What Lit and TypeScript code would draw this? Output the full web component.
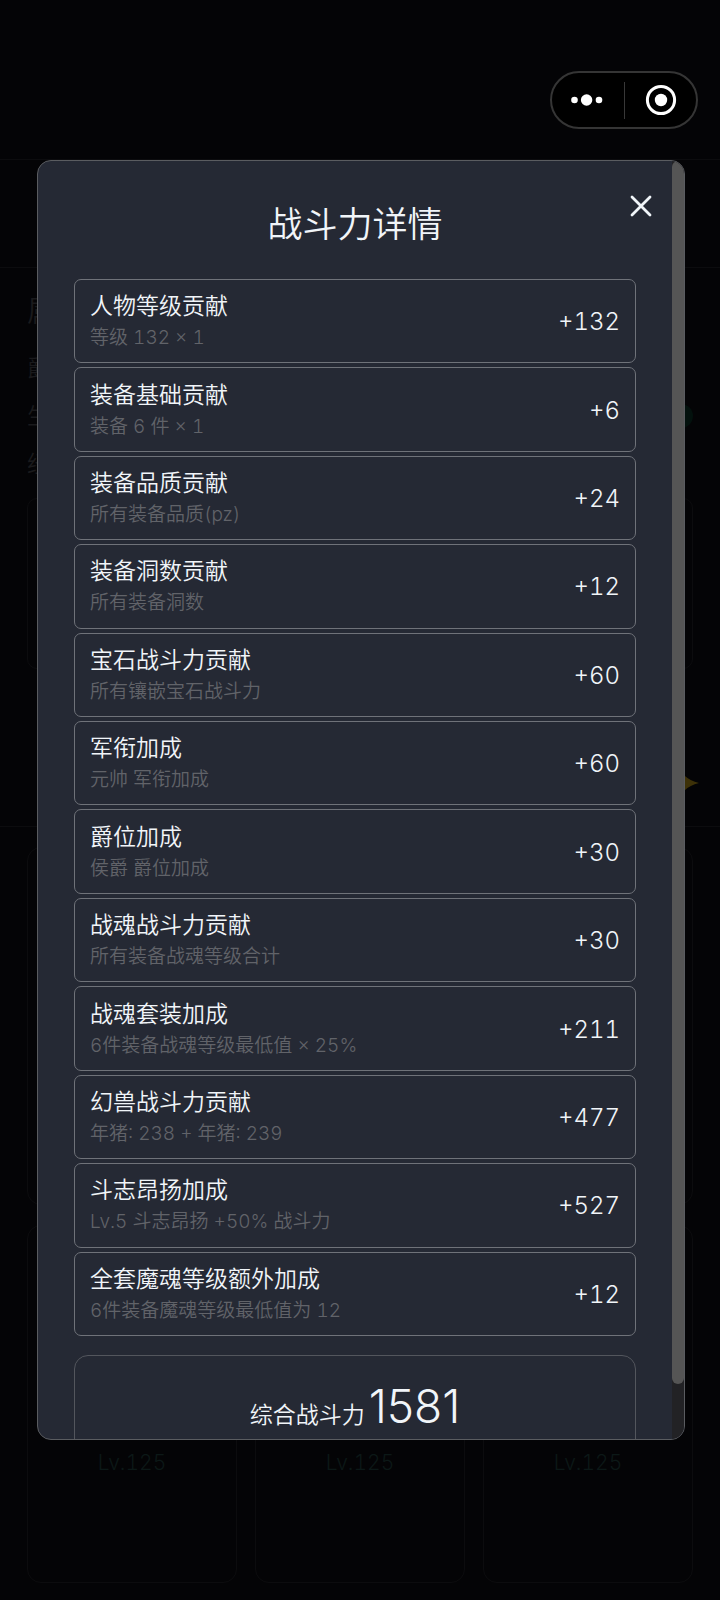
import { LitElement, html, css } from "lit";
import { customElement, property } from "lit/decorators.js";

interface Contribution {
  title: string;
  note: string;
  value: number;
}

const CONTRIBUTIONS: Contribution[] = [
  { title: "人物等级贡献", note: "等级 132 × 1", value: 132 },
  { title: "装备基础贡献", note: "装备 6 件 × 1", value: 6 },
  { title: "装备品质贡献", note: "所有装备品质(pz)", value: 24 },
  { title: "装备洞数贡献", note: "所有装备洞数", value: 12 },
  { title: "宝石战斗力贡献", note: "所有镶嵌宝石战斗力", value: 60 },
  { title: "军衔加成", note: "元帅 军衔加成", value: 60 },
  { title: "爵位加成", note: "侯爵 爵位加成", value: 30 },
  { title: "战魂战斗力贡献", note: "所有装备战魂等级合计", value: 30 },
  { title: "战魂套装加成", note: "6件装备战魂等级最低值 × 25%", value: 211 },
  { title: "幻兽战斗力贡献", note: "年猪: 238 + 年猪: 239", value: 477 },
  { title: "斗志昂扬加成", note: "Lv.5 斗志昂扬 +50% 战斗力", value: 527 },
  { title: "全套魔魂等级额外加成", note: "6件装备魔魂等级最低值为 12", value: 12 },
];

/** Rounded host-app control with the menu and close targets. */
@customElement("mini-capsule")
export class MiniCapsule extends LitElement {
  static styles = css`
    :host {
      display: flex;
      align-items: center;
      box-sizing: border-box;
      width: 148px;
      height: 58px;
      border: 2px solid #353535;
      border-radius: 29px;
      background: #000;
    }
    .key {
      flex: 1;
      display: flex;
      justify-content: center;
      box-sizing: border-box;
      padding: 0;
      border: 0;
      background: none;
    }
    .menu {
      padding-right: 2px;
    }
    .exit {
      padding-left: 2px;
    }
    .rule {
      width: 1px;
      height: 37px;
      background: #383838;
    }
  `;

  render() {
    return html`
      <button class="key menu" aria-label="更多">
        <svg width="32" height="32" viewBox="0 0 32 32" fill="#fff">
          <circle cx="3.5" cy="16" r="3.3" />
          <circle cx="15.6" cy="16" r="5.7" />
          <circle cx="28" cy="16" r="3.3" />
        </svg>
      </button>
      <span class="rule"></span>
      <button class="key exit" aria-label="退出">
        <svg width="32" height="32" viewBox="0 0 32 32">
          <circle cx="16" cy="16" r="13.6" fill="none" stroke="#fff" stroke-width="3" />
          <circle cx="16" cy="16" r="6.2" fill="#fff" />
        </svg>
      </button>
    `;
  }
}

@customElement("contribution-row")
export class ContributionRow extends LitElement {
  @property({ attribute: false }) item!: Contribution;

  static styles = css`
    :host {
      display: flex;
      align-items: center;
      justify-content: space-between;
      box-sizing: border-box;
      padding: 10px 15px 8px;
      border: 1px solid #6f7279;
      border-radius: 7px;
    }
    .title {
      font-size: 23px;
      line-height: 32px;
      color: #f1f5f9;
    }
    .note {
      font-size: 19px;
      line-height: 32px;
      color: #616369;
    }
    .value {
      font-size: 24px;
      line-height: 32px;
      color: #f1f5f9;
    }
  `;

  render() {
    return html`
      <div>
        <div class="title">${this.item.title}</div>
        <div class="note">${this.item.note}</div>
      </div>
      <div class="value">+${this.item.value}</div>
    `;
  }
}

@customElement("power-dialog")
export class PowerDialog extends LitElement {
  static styles = css`
    :host {
      position: relative;
      display: flex;
      box-sizing: border-box;
      width: 100%;
      height: 80vh;
      border: 1px solid #5a5c60;
      border-radius: 14px;
      background: #252934;
      overflow: hidden;
    }
    .body {
      flex: 1;
      min-width: 0;
      overflow-y: auto;
      scrollbar-width: none;
      padding: 36px;
      box-sizing: border-box;
    }
    .heading {
      margin: 0 0 28px;
      font-size: 35px;
      font-weight: inherit;
      line-height: 54px;
      text-align: center;
      color: #f1f5f9;
    }
    .list {
      display: grid;
      grid-auto-rows: 1fr;
      gap: 4px;
      min-height: 1057px;
    }
    .total {
      display: flex;
      align-items: baseline;
      justify-content: center;
      gap: 4px;
      margin-top: 19px;
      padding: 20px;
      border: 1px solid #53565d;
      border-radius: 14px;
      line-height: 60px;
      font-size: 23px;
      color: #f1f5f9;
    }
    .sum {
      font-size: 46px;
      font-variant-numeric: normal;
    }
    .track {
      width: 12px;
      background: #222225;
    }
    .thumb {
      height: 1223px;
      max-height: 96%;
      border-radius: 6px;
      background: #555;
    }
    .close {
      position: absolute;
      top: 28px;
      right: 26px;
      display: flex;
      padding: 4px;
      border: 0;
      background: none;
    }
  `;

  render() {
    return html`
      <div class="body">
        <h2 class="heading">战斗力详情</h2>
        <div class="list">
          ${CONTRIBUTIONS.map((item) => html`<contribution-row .item=${item}></contribution-row>`)}
        </div>
        <div class="total"><span>综合战斗力</span><span class="sum">1581</span></div>
      </div>
      <div class="track"><div class="thumb"></div></div>
      <button class="close" aria-label="关闭">
        <svg width="26" height="26" viewBox="0 0 26 26" fill="none" stroke="#f1f5f9" stroke-width="2.8" stroke-linecap="round">
          <path d="M4 4 22 22M22 4 4 22" />
        </svg>
      </button>
    `;
  }
}

@customElement("app-root")
export class AppRoot extends LitElement {
  static styles = css`
    :host {
      position: relative;
      display: block;
      height: 100vh;
      overflow: hidden;
      background: #040406;
      font-family: Inter, "Noto Sans CJK SC", sans-serif;
      font-weight: 350;
      font-variant-numeric: tabular-nums;
      color: #1a1a1c;
    }
    .topbar,
    .nav {
      box-sizing: border-box;
      border-bottom: 1px solid #0c0c0e;
    }
    .topbar {
      display: flex;
      justify-content: flex-end;
      height: 160px;
      padding: 71px 22px 0;
    }
    .nav {
      height: 108px;
    }
    .profile {
      display: flex;
      flex-direction: column;
      box-sizing: border-box;
      height: 559px;
      padding: 22px 27px 0;
      border-bottom: 1px solid #0c0c0e;
      font-size: 23px;
      line-height: 48px;
    }
    .name {
      font-size: 29px;
      line-height: 44px;
      margin-bottom: 10px;
    }
    .line {
      display: flex;
      align-items: center;
      justify-content: space-between;
    }
    .pill {
      width: 48px;
      height: 24px;
      border-radius: 12px;
      background: #03110d;
    }
    .panel {
      height: 171px;
      margin-top: 10px;
      box-sizing: border-box;
      border: 1px solid #0c0c0e;
      border-radius: 10px;
    }
    .spark {
      align-self: flex-end;
      margin: 92px -6px 0 0;
    }
    .slots {
      display: grid;
      grid-template-columns: repeat(3, 1fr);
      grid-auto-rows: 358px;
      gap: 20px 18px;
      padding: 20px 27px;
    }
    .slot {
      display: flex;
      align-items: flex-end;
      justify-content: center;
      box-sizing: border-box;
      padding-bottom: 104px;
      border: 1px solid #0c0c0e;
      border-radius: 14px;
      font-size: 21px;
      line-height: 30px;
      color: #0c1817;
    }
    .overlay {
      position: absolute;
      inset: 0;
      display: flex;
      align-items: center;
      box-sizing: border-box;
      padding: 0 35px 0 37px;
    }
  `;

  render() {
    return html`
      <header class="topbar"><mini-capsule></mini-capsule></header>
      <nav class="nav"></nav>
      <section class="profile">
        <div class="name">属</div>
        <div class="line">爵</div>
        <div class="line">生<span class="pill"></span></div>
        <div class="line">经</div>
        <div class="panel"></div>
        <svg class="spark" width="44" height="44" viewBox="0 0 44 44" fill="#3d3108">
          <path d="M22 0Q26 18 44 22 26 26 22 44 18 26 0 22 18 18 22 0Z" />
        </svg>
      </section>
      <section class="slots">
        ${[0, 1, 2].map(() => html`<div class="slot"></div>`)}
        ${[0, 1, 2].map(() => html`<div class="slot">Lv.125</div>`)}
      </section>
      <div class="overlay"><power-dialog role="dialog" aria-label="战斗力详情"></power-dialog></div>
    `;
  }
}
